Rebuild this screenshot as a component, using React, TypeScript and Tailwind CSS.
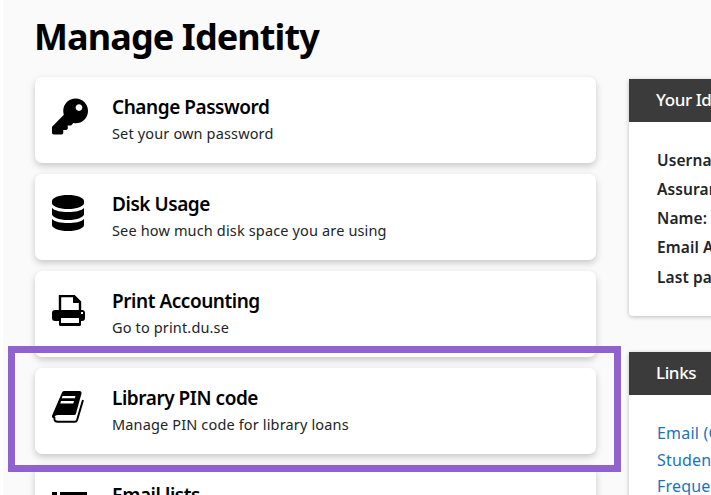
import { FaKey } from "react-icons/fa";
import type { ReactNode } from "react";

type Tool = { icon: ReactNode; title: string; text: string };

function DatabaseIcon() {
  return (
    <svg viewBox="0 0 32 36" className="h-[36px] w-[32px]" fill="#000">
      <path d="M0 6C0 2.7 7 0 16 0s16 2.7 16 6v2c0 3.300-7 6-16 6S0 11.300 0 8Z" />
      <path d="M0 13c3 3 9 4 16 4s13-1 16-4v6c0 3.300-7 6-16 6S0 22.300 0 19Z" />
      <path d="M0 24c3 3 9 4 16 4s13-1 16-4v6c0 3.300-7 6-16 6S0 33.300 0 30Z" />
    </svg>
  );
}

function PrinterIcon() {
  return (
    <svg viewBox="0 0 33 31" className="h-[31px] w-[33px]" fill="#000">
      <path d="M8 16V1h14l6 6v9" fill="none" stroke="#000" strokeWidth="2.400" />
      <path d="M21 1h2l5 5v2h-7Z" />
      <rect x="0" y="15" width="33" height="11" rx="3" />
      <rect x="7" y="21" width="22" height="10" rx="1.500" />
      <rect x="9" y="23" width="18" height="5" fill="#fff" />
      <rect x="29" y="17" width="2" height="2" fill="#fff" />
    </svg>
  );
}

function BookIcon() {
  return (
    <svg viewBox="0 0 32 32" className="h-[32px] w-[32px]" fill="#000">
      <path d="M10 1.500Q10.500 0 12 0h15.500Q30 0 29.500 2.500L24 22.500Q23.500 24 22 24H6Q2.500 24 2.500 27H1.500Q-.8 27 .3 24Z" />
      <path d="M2.500 26Q1.500 30.800 6 30.800h17q1.500 0 2-1.500L31 9" fill="none" stroke="#000" strokeWidth="2" />
      <path d="M10.500 5h13l-.6 2.200h-13ZM9 10h13l-.7 2.500h-13Z" fill="#fff" />
    </svg>
  );
}

function ListIcon() {
  return (
    <svg viewBox="0 0 35 25" className="h-[25px] w-[35px]" fill="#000">
      <rect x="0" y="0" width="5" height="5" />
      <rect x="8" y="0" width="27" height="5" />
      <rect x="0" y="10" width="5" height="5" />
      <rect x="8" y="10" width="27" height="5" />
      <rect x="0" y="20" width="5" height="5" />
      <rect x="8" y="20" width="27" height="5" />
    </svg>
  );
}

const TOOLS: Tool[] = [
  { icon: <FaKey className="h-[37px] w-[36px] text-black" />, title: "Change Password", text: "Set your own password" },
  { icon: <DatabaseIcon />, title: "Disk Usage", text: "See how much disk space you are using" },
  { icon: <PrinterIcon />, title: "Print Accounting", text: "Go to print.du.se" },
  { icon: <BookIcon />, title: "Library PIN code", text: "Manage PIN code for library loans" },
  { icon: <ListIcon />, title: "Email lists", text: "Manage your email lists" },
];

const IDENTITY = ["Username:", "Assurance Level:", "Name:", "Email Address:", "Last password change:"];
const LINKS = ["Email (Outlook)", "Student portal", "Frequently asked questions"];

function ToolCard({ tool }: { tool: Tool }) {
  return (
    <div className="flex h-[86px] shrink-0 items-center rounded-[7px] bg-white pl-[17px] shadow-[0_3px_7px_rgba(0,0,0,0.2)]">
      <div className="flex w-[60px] shrink-0 justify-start pb-[8px]">{tool.icon}</div>
      <div className="flex flex-col">
        <span className="text-[19px] leading-[26px] font-semibold tracking-[-0.45px] text-black">{tool.title}</span>
        <span className="text-[14.500px] leading-[26px] tracking-[0.15px] text-[#212529]">{tool.text}</span>
      </div>
    </div>
  );
}

function SidePanel({ title, children }: { title: string; children: ReactNode }) {
  return (
    <div className="rounded-b-sm bg-white shadow-[0_1px_4px_rgba(0,0,0,0.25)]">
      <div className="flex h-[43px] items-center bg-[#3b3b3b] pb-[2px] pl-[27px] text-[17px] font-medium tracking-[-0.4px] whitespace-nowrap text-white">
        {title}
      </div>
      {children}
    </div>
  );
}

export default function App() {
  return (
    <div className="relative h-[495px] w-[711px] overflow-hidden bg-white pl-[3px] font-['Noto_Sans',sans-serif]">
      <div className="h-full bg-[#fafafa] pl-[32px]">
        <h1 className="-ml-px pt-[12px] text-[36px] leading-[50px] font-bold tracking-[-0.9px] text-black">
          Manage Identity
        </h1>
        <div className="mt-[15px] flex gap-[33px]">
          <div className="flex w-[561px] shrink-0 flex-col gap-[11px]">
            {TOOLS.map((tool) => (
              <ToolCard key={tool.title} tool={tool} />
            ))}
          </div>
          <div className="mt-[2px] flex w-[300px] shrink-0 flex-col gap-[36px]">
            <SidePanel title="Your Identity">
              <div className="flex h-[194px] flex-col pt-[23.500px] pl-[28px] text-[15.500px] leading-[29.300px] font-semibold tracking-[0.1px] text-[#212529]">
                {IDENTITY.map((label) => (
                  <span key={label} className="whitespace-nowrap">{label}</span>
                ))}
              </div>
            </SidePanel>
            <SidePanel title="Links">
              <div className="flex flex-col pt-[25px] pl-[28px] text-[16px] leading-[26.500px] tracking-[0.2px] text-[#1a73c0]">
                {LINKS.map((label) => (
                  <span key={label} className="whitespace-nowrap">{label}</span>
                ))}
              </div>
            </SidePanel>
          </div>
        </div>
      </div>
      {/* highlight drawn on top of the screenshot */}
      <div className="absolute top-[346px] left-[8px] h-[126px] w-[613px] border-[7px] border-[#8f62cf]" />
    </div>
  );
}
